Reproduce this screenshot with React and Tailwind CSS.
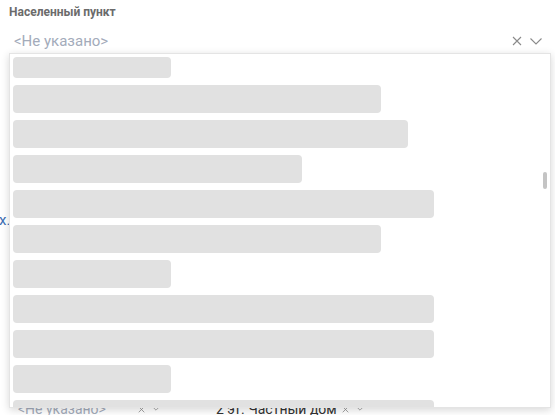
import React from "react";

const bars = [158, 368, 395, 289, 421, 368, 158, 421, 421, 158, 421];

const Cross = ({ size = 9 }) => (
  <svg width={size} height={size} viewBox="0 0 10 10" fill="none" stroke="#8a8a8a" strokeWidth="1.1">
    <path d="M1 1L9 9M9 1L1 9" />
  </svg>
);

const Chevron = ({ w = 12, h = 7 }) => (
  <svg width={w} height={h} viewBox="0 0 12 7" fill="none" stroke="#8a8a8a" strokeWidth="1.1">
    <path d="M0.5 0.5L6 6L11.5 0.5" />
  </svg>
);

export default function App() {
  return (
    <div
      className="relative w-[555px] h-[415px] overflow-hidden bg-white"
      style={{ fontFamily: "Roboto, 'Liberation Sans', sans-serif" }}
    >
      {/* underlying form */}
      <div className="flex flex-col pl-[9px] pr-[12px] pt-[4px]">
        <label className="text-[12px] font-bold text-[#6b6b6b] leading-[16px]">Населенный пункт</label>
        <div className="flex items-center justify-between mt-[12px] pl-[5px] h-[18px]">
          <span className="text-[15px] text-[#a3abba] leading-[18px]">&lt;Не указано&gt;</span>
          <div className="flex items-center gap-[8px] pr-[1px]">
            <Cross size={10} />
            <Chevron />
          </div>
        </div>
        <div className="h-[161px]" />
        <span className="-ml-[10px] text-[15px] text-[#3b6db3] leading-[18px]">х.</span>
        <div className="h-[172px]" />
        <div className="flex items-center text-[14px] text-[#a3abba] leading-[16px]">
          <span className="pl-[9px]">&lt;Не указано&gt;</span>
          <span className="ml-[32px] flex gap-[7px]"><Cross size={7} /><Chevron w={8} h={5} /></span>
          <span className="ml-[56px] text-[#333]">2 эт. Частный дом</span>
          <span className="ml-[5px] flex gap-[7px]"><Cross size={7} /><Chevron w={8} h={5} /></span>
        </div>
      </div>

      {/* dropdown menu */}
      <div className="absolute left-[9px] top-[53px] w-[542px] h-[355px] bg-white border border-[#e4e4e4] shadow-[0_2px_8px_rgba(0,0,0,0.16)] overflow-hidden">
        <div className="flex flex-col gap-[7px] pl-[3px] pt-[3px]">
          {bars.map((w, i) => (
            <div
              key={i}
              className={`${i === 0 ? "h-[21px]" : "h-[28px]"} rounded-[4px] bg-[#e1e1e1]`}
              style={{ width: w }}
            />
          ))}
        </div>
        <div className="absolute right-[3px] top-[118px] w-[4px] h-[17px] rounded-full bg-[#c4c4c4]" />
      </div>
    </div>
  );
}
